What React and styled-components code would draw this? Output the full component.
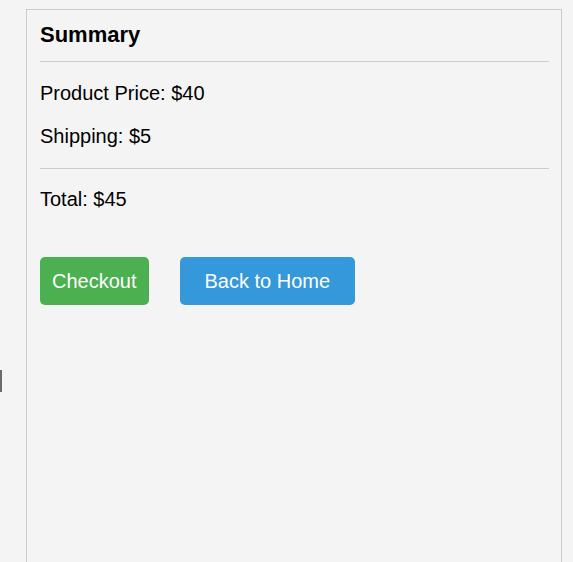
import React from "react";
import styled, { createGlobalStyle } from "styled-components";

const Global = createGlobalStyle`
  html, body { margin: 0; padding: 0; background: #f4f4f4; }
  body { font-family: "Liberation Sans", Arial, sans-serif; color: #000; overflow: hidden; }
`;

const Page = styled.div`
  display: flex;
  align-items: flex-start;
  min-height: 562px;
`;

const Rail = styled.div`
  width: 26px;
  flex: none;
  display: flex;
`;

const Handle = styled.div`
  width: 2px;
  height: 22px;
  margin-top: 370px;
  background: #6b6b6b;
`;

const Card = styled.section`
  flex: 1;
  margin: 9px 11px 0 0;
  border: 1px solid #cccccc;
  padding: 12px 12px 0 13px;
  min-height: 640px;
  box-sizing: border-box;
`;

const Title = styled.h2`
  margin: 0;
  padding-bottom: 14px;
  border-bottom: 1px solid #cccccc;
  font-size: 22px;
  font-weight: bold;
  line-height: 25px;
`;

const Line = styled.p`
  margin: ${p => p.$top}px 0 0;
  font-size: 20px;
  line-height: 23px;
`;

const Divider = styled.hr`
  border: 0;
  border-top: 1px solid #cccccc;
  margin: 20px 0 0;
`;

const Actions = styled.div`
  display: flex;
  gap: 31px;
  margin-top: 46px;
`;

const Button = styled.button`
  font-family: "Liberation Sans", Arial, sans-serif;
  font-size: 20px;
  height: 48px;
  padding: 0 ${p => p.$pad}px;
  color: #fff;
  background: ${p => p.$bg};
  border: 0;
  border-radius: 5px;
  cursor: pointer;
`;

export default function App() {
  return (
    <>
      <Global />
      <Page>
        <Rail>
          <Handle />
        </Rail>
        <Card>
          <Title>Summary</Title>
          <Line $top={20}>Product Price: $40</Line>
          <Line $top={20}>Shipping: $5</Line>
          <Divider />
          <Line $top={19}>Total: $45</Line>
          <Actions>
            <Button $bg="#4caf50" $pad={12}>Checkout</Button>
            <Button $bg="#3498db" $pad={25}>Back to Home</Button>
          </Actions>
        </Card>
      </Page>
    </>
  );
}
